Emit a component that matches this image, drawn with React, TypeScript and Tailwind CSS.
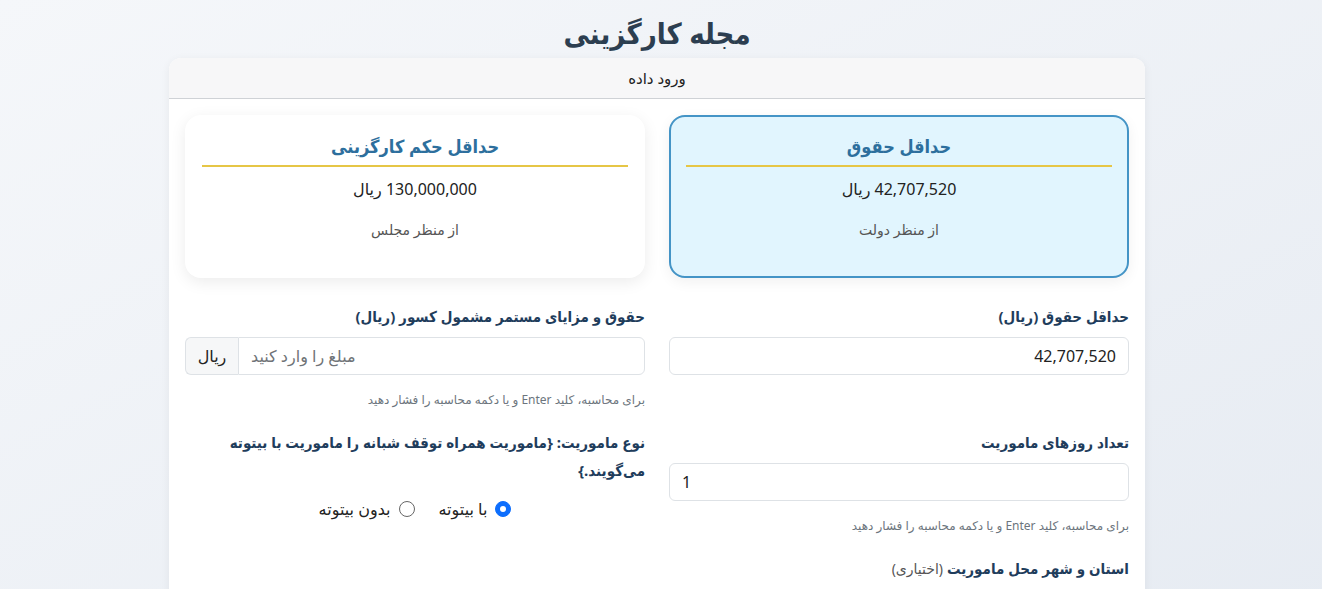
import React from 'react';

const font = { fontFamily: '"Noto Sans", "DejaVu Sans", sans-serif' };
const bold = { fontFamily: '"Noto Sans", "DejaVu Sans Condensed", "DejaVu Sans", sans-serif' };

function ResultCard({ title, value, note, active }: { title: string; value: string; note: string; active?: boolean }) {
  return (
    <div
      className={
        active
          ? 'h-[163px] rounded-2xl border-2 border-[#4494c6] bg-[#e1f5fe] px-[15px] pt-[15px] shadow-[0_4px_14px_rgba(0,0,0,0.06)]'
          : 'h-[163px] rounded-2xl border-2 border-transparent bg-white px-[15px] pt-[15px] shadow-[0_4px_16px_rgba(0,0,0,0.08)]'
      }
    >
      <h3 style={bold} className="text-center text-[18px] font-bold leading-[28px] text-[#2d6f9d]">{title}</h3>
      <div className="mt-[5px] h-[2px] bg-[#e6c646]" />
      <p className="mt-[10px] text-center text-[16px] leading-[24px] text-[#222]">
        <span dir="ltr">{value}</span> ریال
      </p>
      <p className="mt-[19px] text-center text-[14px] leading-[20px] text-[#555]">{note}</p>
    </div>
  );
}

function Help() {
  return (
    <p className="mt-4 text-[12px] leading-[18px] text-[#6c757d]">
      برای محاسبه، کلید Enter و یا دکمه محاسبه را فشار دهید
    </p>
  );
}

function Radio({ checked, label }: { checked?: boolean; label: string }) {
  return (
    <label className="flex items-center gap-2 text-[16px] leading-[24px] text-[#222]">
      {checked ? (
        <span className="flex h-4 w-4 items-center justify-center rounded-full border border-[#0d6efd] bg-[#0d6efd]">
          <span className="h-[6px] w-[6px] rounded-full bg-white" />
        </span>
      ) : (
        <span className="h-4 w-4 rounded-full border border-[#666] bg-white" />
      )}
      {label}
    </label>
  );
}

const labelCls = 'text-[15px] font-bold leading-[28px] text-[#1f3d5c]';

export default function App() {
  return (
    <div style={font} className="min-h-screen bg-gradient-to-br from-[#f5f7fa] to-[#e6ebf2]">
      <div dir="rtl" className="mr-auto w-[1314px]">
        <h1 style={bold} className="pt-[13px] pb-[5px] text-center text-[29px] font-bold leading-[40px] text-[#2c3e50]">
          مجله کارگزینی
        </h1>

        <div className="mx-auto w-[976px] rounded-xl bg-white shadow-[0_2px_10px_rgba(0,0,0,0.06)]">
          <div className="flex h-[41px] items-center justify-center rounded-t-xl border-b border-[#cfd2d6] bg-[#f7f7f8] text-[15px] text-[#222]">
            ورود داده
          </div>

          <div className="grid grid-cols-2 gap-x-6 px-4 pt-4 pb-6">
            {/* cards */}
            <ResultCard title="حداقل حقوق" value="42,707,520" note="از منظر دولت" active />
            <ResultCard title="حداقل حکم کارگزینی" value="130,000,000" note="از منظر مجلس" />

            {/* row 1 */}
            <div className="mt-[24px] flex flex-col">
              <label style={bold} className={`mb-[7px] ${labelCls}`}>حداقل حقوق (ریال)</label>
              <input
                readOnly
                value="42,707,520"
                className="h-[38px] rounded-md border border-[#dee2e6] bg-white px-3 text-right text-[16px] text-[#222] outline-none"
              />
              <div className="h-[34px]" />
            </div>
            <div className="mt-[24px] flex flex-col">
              <label style={bold} className={`mb-[7px] ${labelCls}`}>
                حقوق و مزایای مستمر مشمول کسور (ریال)
              </label>
              <div className="flex h-[38px]">
                <input
                  dir="ltr"
                  placeholder="مبلغ را وارد کنید"
                  className="min-w-0 flex-1 rounded-r-md border border-[#dee2e6] bg-white px-3 text-left text-[16px] text-[#222] outline-none placeholder:text-[#6f7377]"
                />
                <span className="flex w-[53px] items-center justify-center rounded-l-md border border-r-0 border-[#dee2e6] bg-[#f6f7f8] text-[16px] text-[#222]">
                  ریال
                </span>
              </div>
              <Help />
            </div>

            {/* row 2 */}
            <div className="mt-[19px] flex flex-col">
              <label style={bold} className={`mb-[7px] ${labelCls}`}>تعداد روزهای ماموریت</label>
              <input
                dir="ltr"
                readOnly
                value="1"
                className="h-[38px] rounded-md border border-[#dee2e6] bg-white px-3 text-left text-[16px] text-[#222] outline-none"
              />
              <Help />
            </div>
            <div className="mt-[19px] flex flex-col">
              <label style={bold} className={labelCls}>
                نوع ماموریت: {'{'}ماموریت همراه توقف شبانه را ماموریت با بیتوته می‌گویند.{'}'}
              </label>
              <div className="mt-[13px] flex items-center justify-center gap-6">
                <Radio checked label="با بیتوته" />
                <Radio label="بدون بیتوته" />
              </div>
            </div>

            {/* row 3 */}
            <div className="mt-[19px] flex flex-col">
              <label style={bold} className={`mb-[7px] ${labelCls}`}>
                استان و شهر محل ماموریت{' '}
                <span style={font} className="text-[14px] font-normal text-[#555]">(اختیاری)</span>
              </label>
              <input className="h-[38px] rounded-md border border-[#dee2e6] bg-white px-3 text-[16px] outline-none" />
            </div>
            <div />
          </div>
        </div>
      </div>
    </div>
  );
}
